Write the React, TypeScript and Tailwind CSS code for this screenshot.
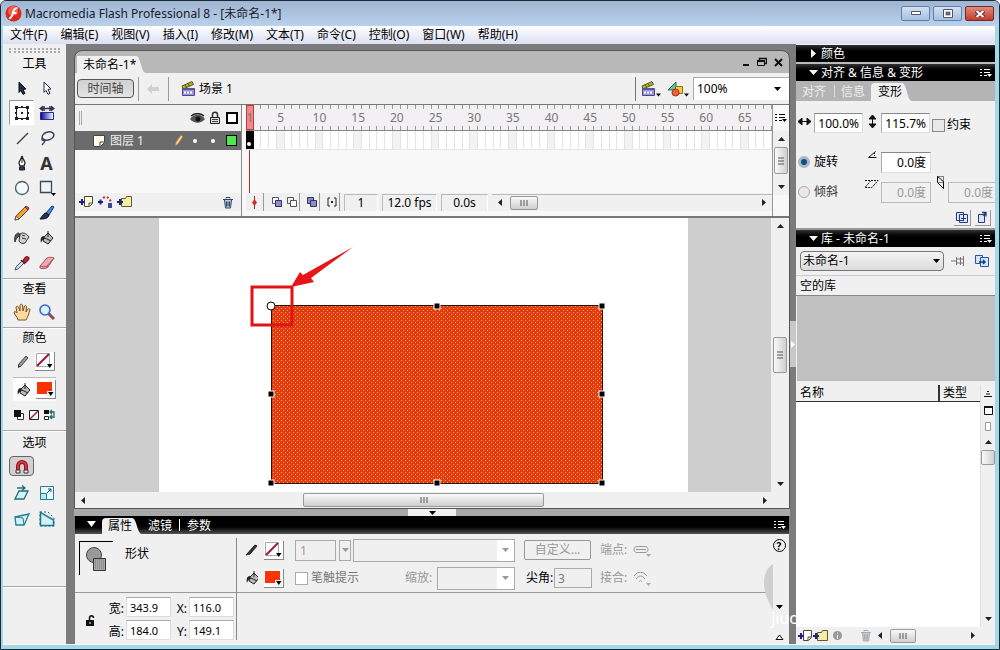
import { useState } from 'react';
import type { ReactNode } from 'react';

type SvgProps = { w?: number; h?: number; className?: string; children: ReactNode };

function Svg({ w = 16, h = 16, className = '', children }: SvgProps) {
  return (
    <svg width={w} height={h} viewBox={`0 0 ${w} ${h}`} fill="none" className={`shrink-0 ${className}`} aria-hidden="true">
      {children}
    </svg>
  );
}

const Down = ({ className = 'text-black' }: { className?: string }) => (
  <Svg w={7} h={4} className={className}><path d="M0 0h7L3.500 4z" fill="currentColor" /></Svg>
);

const Clapper = () => (
  <Svg w={15} h={16}>
    <path d="M1 5 11 .5l1.500 3L2 8z" fill="#b4b030" stroke="#5c5c10" />
    <path d="m4 4 1.500 2M7 2.500 8.500 5" stroke="#5c5c10" />
    <path d="M1.500 7.500h12v7h-12z" fill="#9a94d8" stroke="#4c478c" />
    <path d="M2 8h11" stroke="#5a549c" strokeWidth="2" />
    <path d="M3 11.500h9" stroke="#fff" strokeWidth="2" strokeDasharray="2 1" />
  </Svg>
);

const Bucket = () => (
  <Svg>
    <path d="M5 7 9 3l5 5-5 6-5-3z" fill="#b9b9b9" stroke="#222" />
    <path d="M9 1v6M6 8l6 3" stroke="#222" />
    <path d="M5 6C2 6 1 9 2 13c1-3 2-4 4-4z" fill="#222" />
  </Svg>
);

const Pencil = ({ color = '#f0a030' }: { color?: string }) => (
  <Svg>
    <path d="m1 15 1-4L11 2l3 3-9 9z" fill={color} stroke="#6a4a20" />
    <path d="m11 2 1-1 3 2-1 2z" fill="#d6506a" stroke="#7a2a3a" />
    <path d="m1 15 1-4 3 3z" fill="#fff2d0" stroke="#555" />
  </Svg>
);

const NewSymbol = ({ fill = '#fff' }: { fill?: string }) => (
  <Svg w={15} h={14}>
    <path d="M5.500 1.500h8v7l-3 3h-5z" fill={fill} stroke="#4a4a3a" />
    <path d="M13 8h-3v3" stroke="#4a4a3a" />
    <path d="M0 7h6M3 4v6" stroke="#20208a" strokeWidth="2" />
  </Svg>
);

const NewFolder = () => (
  <Svg w={16} h={14}>
    <path d="M4.500 3.500h4l1-2h5v10h-10z" fill="#f4efa4" stroke="#5e5a30" />
    <path d="M0 7h6M3 4v6" stroke="#20208a" strokeWidth="2" />
  </Svg>
);

const Trash = ({ color = '#2c4668' }: { color?: string }) => (
  <Svg w={12} h={13}>
    <path d="M1 3.500h10M4 2.500v-1h4v1" stroke={color} />
    <path d="m2.500 4 1 8h5l1-8" fill="#b9cce0" stroke={color} />
    <path d="M4.500 5.500v5M6 5.500v5M7.500 5.500v5" stroke={color} />
  </Svg>
);

const MenuGlyph = ({ className = 'text-black' }: { className?: string }) => (
  <Svg w={12} h={10} className={className}>
    <path d="M0 1.500h2M4 1.500h6M0 4.500h2M4 4.500h6M0 7.500h2M4 7.500h3" stroke="currentColor" />
    <path d="M7 6h5L9.500 9z" fill="currentColor" />
  </Svg>
);

function Tool({ label, active, className = '', children }: { label: string; active?: boolean; className?: string; children: ReactNode }) {
  return (
    <button
      type="button"
      aria-label={label}
      className={`flex items-center justify-center ${active ? 'border border-[#999] border-r-white border-b-white bg-white' : ''} ${className}`}
    >
      {children}
    </button>
  );
}

const tools = [
  {
    label: 'Selection',
    icon: <Svg><path d="m5 2 7 7-3 .4 2 4-2 1-2-4-2 2z" fill="#1d2d4a" stroke="#111" /></Svg>,
  },
  {
    label: 'Subselection',
    icon: <Svg><path d="m5 2 7 7-3 .4 2 4-2 1-2-4-2 2z" fill="#fff" stroke="#1d2d4a" /></Svg>,
  },
  {
    label: 'Free transform',
    icon: (
      <Svg>
        <path d="M2.500 2.500h11v11h-11z" stroke="#222" />
        <path d="M1 1h3v3H1zM7 1h2v2H7zM12 1h3v3h-3zM1 7h2v2H1zM13 7h2v2h-2zM1 12h3v3H1zM7 13h2v2H7zM12 12h3v3h-3zM7 7h2v2H7z" fill="#222" />
      </Svg>
    ),
  },
  {
    label: 'Gradient transform',
    icon: (
      <Svg>
        <defs><linearGradient id="grad"><stop stopColor="#000090" /><stop offset="1" stopColor="#fff" /></linearGradient></defs>
        <path d="M1.500 7.500h13v7h-13z" fill="url(#grad)" stroke="#222a90" />
        <path d="M2 3.500h12M5 1v5M11 1v5" stroke="#33334a" strokeWidth="1.500" />
        <path d="m0 3.500 4-3v6zM16 3.500l-4-3v6z" fill="#33334a" />
      </Svg>
    ),
  },
  { label: 'Line', icon: <Svg><path d="M3 14 14 3" stroke="#444" strokeWidth="1.500" /></Svg> },
  {
    label: 'Lasso',
    icon: (
      <Svg>
        <ellipse cx="9" cy="6" rx="6" ry="4" transform="rotate(-18 9 6)" stroke="#3a4658" strokeWidth="1.500" />
        <path d="M4 8c-2 1-1 3 1 2s1 2-2 5" stroke="#3a4658" strokeWidth="1.500" />
      </Svg>
    ),
  },
  {
    label: 'Pen',
    icon: (
      <Svg>
        <path d="M8 1c-1 4-3 5-3 7l1 3h4l1-3c0-2-2-3-3-7z" fill="#fff" stroke="#222" strokeWidth="1.300" />
        <path d="M8 2v6M5.500 12h5v3h-5z" fill="#32326c" stroke="#222" />
      </Svg>
    ),
  },
  { label: 'Text', icon: <span className="text-lg leading-5 font-bold text-[#333]">A</span> },
  { label: 'Oval', icon: <Svg><circle cx="8" cy="8" r="6.500" fill="#f4fafc" stroke="#4a5a6a" strokeWidth="1.300" /></Svg> },
  {
    label: 'Rectangle',
    icon: (
      <Svg w={18}>
        <path d="M2.500 1.500h11v11h-11z" fill="#eef4f8" stroke="#3a4a5a" strokeWidth="1.300" />
        <path d="M13 13h5l-2.500 3z" fill="#000" />
      </Svg>
    ),
  },
  { label: 'Pencil', icon: <Pencil /> },
  {
    label: 'Brush',
    icon: (
      <Svg>
        <path d="m7 8 6-7 2 1-5 8z" fill="#4a86d8" stroke="#1c3c74" />
        <path d="M7 8c-2 0-3 2-6 6 4 0 8 0 9-4z" fill="#23355c" stroke="#111" />
      </Svg>
    ),
  },
  {
    label: 'Ink bottle',
    icon: (
      <Svg>
        <path d="M6 4c3-2 6-1 9 3l-4 6c-3 1-5 0-6-2z" fill="#d2d2d2" stroke="#333" />
        <path d="M5 3C1 3 0 8 1 12c1-3 2-5 5-6z" fill="#555" stroke="#333" />
        <path d="m8 5 3 1M8 8l4 1" stroke="#333" />
      </Svg>
    ),
  },
  { label: 'Paint bucket', icon: <Bucket /> },
  {
    label: 'Eyedropper',
    icon: (
      <Svg>
        <path d="m1 15 1-3 6-6 2 2-6 6z" fill="#cfe6f6" stroke="#456" />
        <path d="m7 5 4 4M9 6c1-2 3-5 5-4s1 3-3 6z" fill="#c02830" stroke="#7a1a24" strokeWidth="1.300" />
      </Svg>
    ),
  },
  {
    label: 'Eraser',
    icon: (
      <Svg>
        <path d="m1 11 7-8c2-1 5-1 7 0l-6 9c-2 2-6 2-8 1z" fill="#f4a8b0" stroke="#a05060" />
        <path d="M1 11c2 1 5 1 7 0l7-8M8 11v2" stroke="#a05060" />
      </Svg>
    ),
  },
];

function StrokeSwatch() {
  return (
    <button type="button" aria-label="Stroke color" className="border-r border-b border-[#888] bg-white p-px">
      <Svg w={17} h={16}>
        <path d="M.5.5h13v13H.5z" fill="#fff" stroke="#aaa" />
        <path d="M1 13 13 1" stroke="#a0183c" strokeWidth="2" />
        <path d="M11 11h5.500l-2.750 4z" fill="#000" />
      </Svg>
    </button>
  );
}

function FillSwatch() {
  return (
    <button type="button" aria-label="Fill color" className="border-r border-b border-[#888] bg-white p-px">
      <Svg w={17} h={16}>
        <path d="M0 1h15v12H0z" fill="#fb3203" />
        <path d="M10 10h7v6h-7z" fill="#f4f4f4" />
        <path d="M11 11h5.500l-2.750 4z" fill="#000" />
      </Svg>
    </button>
  );
}

const Rule = () => <div className="h-[2px] border-t border-[#a8a8a8] bg-white" />;

function Toolbox() {
  return (
    <aside className="flex w-[63px] shrink-0 flex-col bg-[#f0f0f0] text-center">
      <div className="mx-[6px] mt-1 h-[5px] border-y-2 border-dotted border-[#aaa]" />
      <h2 className="mt-[3px] leading-4">工具</h2>
      <div className="mx-[6px] mt-[3px] grid w-[50px] grid-cols-2">
        {tools.map((t) => (
          <Tool key={t.label} label={t.label} active={t.label === 'Free transform'} className="h-[25px]">
            {t.icon}
          </Tool>
        ))}
      </div>
      <div className="mt-[3px]"><Rule /></div>
      <h2 className="mt-px leading-4">查看</h2>
      <div className="mx-[6px] mt-[2px] mb-[3px] grid h-[25px] w-[50px] grid-cols-2">
        <Tool label="Hand">
          <Svg w={18} h={18}>
            <path d="M5 17c0-3-4-5-4-8 1-1 2 0 3 1L3 4c1-1 2-1 2.500 0L7 8V2c1-1 2-1 2.500 0L10 8l1.500-5c1-1 2 0 2 1L13 9l2-3c1-1 2 0 2 1-1 3-2 7-4 10z" fill="#fbd9a0" stroke="#7a5220" />
          </Svg>
        </Tool>
        <Tool label="Zoom">
          <Svg w={18} h={18}>
            <path d="m10 10 6 6" stroke="#8a4a5a" strokeWidth="3" />
            <circle cx="7" cy="7" r="5" fill="#d8f0ff" stroke="#3c66c4" strokeWidth="1.600" />
          </Svg>
        </Tool>
      </div>
      <Rule />
      <h2 className="mt-px leading-4">颜色</h2>
      <div className="flex h-[30px] items-center justify-end gap-1 pr-[11px]">
        <Svg><path d="m3 12 8-9 2 2-8 9z" fill="#999" stroke="#444" /><path d="M3 12v3l2-1z" fill="#333" /></Svg>
        <StrokeSwatch />
      </div>
      <div className="mx-[10px] mt-px flex h-6 items-center justify-end gap-1 border-t border-[#bbb] bg-[#fdfdfd]">
        <Bucket />
        <FillSwatch />
      </div>
      <div className="mt-1 flex h-5 items-center justify-center gap-[3px]">
        <Tool label="Black and white">
          <Svg w={12} h={12}><path d="M4.500 4.500h6v6h-6z" fill="#fff" stroke="#333" /><path d="M1 1h7v7H1z" fill="#111" /></Svg>
        </Tool>
        <Tool label="No color">
          <Svg w={12} h={12}><path d="M1.500 1.500h9v9h-9z" fill="#fff" stroke="#222" /><path d="m2 10 8-8" stroke="#a0183c" strokeWidth="1.500" /></Svg>
        </Tool>
        <Tool label="Swap colors">
          <Svg w={13} h={12}>
            <path d="M1 1h5v4H1z" fill="#111" /><path d="M1.500 7.500h4v3h-4z" fill="#fff" stroke="#222" />
            <path d="M7 3h4v5H7M9 1 7 3l2 2M9 6 7 8l2 2" stroke="#1d6c70" strokeWidth="1.300" />
          </Svg>
        </Tool>
      </div>
      <div className="mt-[5px]"><Rule /></div>
      <h2 className="mt-[3px] leading-4">选项</h2>
      <div className="mx-[6px] mt-[5px] grid w-[50px] grid-cols-2">
        <button type="button" aria-label="Snap" aria-pressed="true" className="mb-1 flex h-5 items-center justify-center rounded-sm border border-[#666] bg-[#d4d0d0]">
          <Svg w={14} h={15}>
            <path d="M3 13V7a4 4 0 0 1 8 0v6" stroke="#8a1420" strokeWidth="4" />
            <path d="M3 11V7a4 4 0 0 1 8 0v4" stroke="#d83444" strokeWidth="2" />
            <path d="M1 11h4v3H1zM9 11h4v3H9z" fill="#eef" stroke="#333" />
          </Svg>
        </button>
        <span />
        <Tool label="Rotate and skew" className="h-[26px]">
          <Svg><path d="M5 6h9l-4 8H1z" fill="#d4f2f4" stroke="#1f6f78" strokeWidth="1.300" /><path d="M3 3h7M8 .5 11 3 8 5.500" stroke="#1f6f78" strokeWidth="1.300" /></Svg>
        </Tool>
        <Tool label="Scale" className="h-[26px]">
          <Svg><path d="M1.500 1.500h13v13h-13z" fill="#eafcff" stroke="#1f7f98" /><path d="M1.500 8.500h6v6h-6z" fill="#bfe6ee" stroke="#1f7f98" /><path d="m8 8 4-4M9 4h3v3" stroke="#1d4c70" /></Svg>
        </Tool>
        <Tool label="Distort" className="h-[26px]">
          <Svg><path d="m1 6 14-3-5 11H2z" fill="#d4f2f4" stroke="#1f7f98" strokeWidth="1.300" /><path d="m1 6 8 1 1 7" stroke="#1f7f98" /></Svg>
        </Tool>
        <Tool label="Envelope" className="h-[26px]">
          <Svg><path d="M1.500 1.500v13h13V9z" fill="#d4f2f4" stroke="#1f7f98" strokeWidth="1.500" /><path d="M1 1h8l6 6v8H1z" stroke="#1f5f78" strokeDasharray="2 2" /></Svg>
        </Tool>
      </div>
      <div className="mt-[54px]"><Rule /></div>
    </aside>
  );
}

function TitleBar() {
  return (
    <header className="flex h-[25px] shrink-0 items-center gap-[3px] bg-gradient-to-b from-[#9fb5d1] to-[#b9d1ec] pr-[5px] pl-1 text-[#1a1a2a]">
      <Svg w={17} h={17}>
        <circle cx="8.500" cy="8.500" r="8" fill="#d92a1c" />
        <circle cx="8" cy="6" r="5" fill="#f0604c" />
        <path d="M12.500 3C8 3 8 8 7.500 9.500S6 13 4 13.500M7.500 8h4" stroke="#fff" strokeWidth="2" />
      </Svg>
      <h1 className="flex-1 text-[12px]">Macromedia Flash Professional 8 - [未命名-1*]</h1>
      <div className="flex gap-[3px]">
        <button type="button" aria-label="Minimize" className="flex h-[15px] w-[29px] items-center justify-center rounded-xs border border-[#6580a8] bg-gradient-to-b from-[#d2e0f2] to-[#a5c0e0]">
          <Svg w={10} h={5}><path d="M.5.5h9v3h-9z" fill="#fff" stroke="#556" /></Svg>
        </button>
        <button type="button" aria-label="Maximize" className="flex h-[15px] w-[29px] items-center justify-center rounded-xs border border-[#6580a8] bg-gradient-to-b from-[#d2e0f2] to-[#a5c0e0]">
          <Svg w={10} h={9}><path d="M1.500 1.500h7v6h-7z" fill="#889" stroke="#fff" strokeWidth="2" /><path d="M.5.5h9v8h-9zM3.500 3.500h3v2h-3z" stroke="#556" /></Svg>
        </button>
        <button type="button" aria-label="Close" className="flex h-[15px] w-[29px] items-center justify-center rounded-xs border border-[#7a2a22] bg-gradient-to-b from-[#e08a7c] to-[#c0392b]">
          <Svg w={10} h={8}><path d="m1 1 8 6M9 1 1 7" stroke="#633" strokeWidth="3.500" /><path d="m1.500 1 7 6M8.500 1l-7 6" stroke="#fff" strokeWidth="2" /></Svg>
        </button>
      </div>
    </header>
  );
}

const menus = ['文件(F)', '编辑(E)', '视图(V)', '插入(I)', '修改(M)', '文本(T)', '命令(C)', '控制(O)', '窗口(W)', '帮助(H)'];

function MenuBar() {
  return (
    <nav className="flex h-[18px] shrink-0 items-center gap-[13px] bg-gradient-to-b from-white to-[#dadff2] pl-[7px]">
      {menus.map((m) => (
        <button key={m} type="button" className="leading-4">{m}</button>
      ))}
    </nav>
  );
}

function HScroll({ thumb, before = 'w-0' }: { thumb: string; before?: string }) {
  return (
    <div className="flex h-4 min-w-0 flex-1 items-center bg-[#f0f0f0]">
      <button type="button" aria-label="Scroll left" className="flex w-4 justify-center"><Svg w={4} h={7}><path d="M4 0v7L0 3.500z" fill="#222" /></Svg></button>
      <span className={before} />
      <div className={`flex h-[14px] items-center justify-center rounded-xs border border-[#999] bg-gradient-to-b from-[#fafafa] to-[#cfcfd2] ${thumb}`}>
        <Svg w={8} h={6}><path d="M1 0v6M4 0v6M7 0v6" stroke="#555" /></Svg>
      </div>
      <span className="flex-1" />
      <button type="button" aria-label="Scroll right" className="flex w-4 justify-center"><Svg w={4} h={7}><path d="M0 0v7l4-3.500z" fill="#222" /></Svg></button>
    </div>
  );
}

function VScroll({ thumb, before = 'h-0', grip = true }: { thumb: string; before?: string; grip?: boolean }) {
  return (
    <div className="flex min-h-0 flex-1 flex-col items-center bg-[#f0f0f0]">
      <button type="button" aria-label="Scroll up" className="flex h-4 shrink-0 items-center"><Svg w={7} h={4}><path d="M0 4h7L3.500 0z" fill="#222" /></Svg></button>
      <span className={before} />
      <div className={`flex w-[14px] shrink-0 items-center justify-center rounded-xs border border-[#999] bg-gradient-to-r from-[#fafafa] to-[#cfcfd2] ${thumb}`}>
        {grip && <Svg w={6} h={8}><path d="M0 1h6M0 4h6M0 7h6" stroke="#555" /></Svg>}
      </div>
      <span className="flex-1" />
      <button type="button" aria-label="Scroll down" className="flex h-4 shrink-0 items-center"><Down className="text-[#222]" /></button>
    </div>
  );
}

function EditBar() {
  return (
    <div className="flex h-8 shrink-0 items-center border-b border-[#777] bg-[#f0f0f0]">
      <button type="button" aria-pressed="true" className="ml-[2px] h-[19px] w-[57px] rounded-sm border border-[#555] bg-gradient-to-b from-[#cfcfcf] to-[#e4e4e4] leading-4 text-[#444]">时间轴</button>
      <span className="ml-1 h-6 w-px bg-[#999]" />
      <button type="button" aria-label="Back" className="ml-[7px]">
        <Svg w={14} h={10}><path d="M6 0v3h7v4H6v3L1 5z" fill="#d0d0d0" /></Svg>
      </button>
      <span className="ml-[8px] h-6 w-px bg-[#999]" />
      <span className="ml-[12px] flex items-center gap-[3px]"><Clapper />场景 1</span>
      <span className="flex-1" />
      <span className="h-6 w-px bg-[#777]" />
      <Tool label="Edit scene" className="ml-[5px]"><Clapper /><Down className="mt-3 w-[5px]" /></Tool>
      <Tool label="Edit symbols" className="ml-[6px]">
        <Svg w={17} h={16}>
          <path d="M1 9 9 1v8z" fill="#5cc8a0" stroke="#207050" />
          <path d="M8.500 5.500h7v7h-7z" fill="#f0d040" stroke="#907010" />
          <circle cx="8.500" cy="11.500" r="3.500" fill="#f06040" stroke="#a03010" />
        </Svg>
        <Down className="mt-3 w-[5px]" />
      </Tool>
      <div className="relative ml-1">
        <select aria-label="Zoom level" className="h-[23px] w-[96px] appearance-none border-t border-l border-[#aaa] bg-white pl-[3px] text-[12px]">
          <option>100%</option>
        </select>
        <Down className="pointer-events-none absolute top-[10px] right-2" />
      </div>
    </div>
  );
}

const frames = Array.from({ length: 68 }, (_, i) => i + 1);

function Timeline() {
  return (
    <section className="flex h-[113px] shrink-0 border-b-2 border-[#777] bg-[#f8f8f8]">
      <div className="flex w-[167px] shrink-0 flex-col border-r border-[#888]">
        <div className="flex h-[26px] items-center bg-[#f0f0f0]">
          <span className="ml-1 h-[14px] w-[3px] border-x border-[#aaa]" />
          <span className="flex-1" />
          <Svg w={15} h={11}><path d="M0 6c4-6 11-6 15 0-4 5-11 5-15 0z" fill="#555" /><path d="M1 3c4-3 9-3 13 0" stroke="#222" strokeWidth="1.500" /><circle cx="8" cy="6" r="2.500" fill="#111" /></Svg>
          <Svg w={12} h={14} className="ml-1"><path d="M3.500 6V3.500c0-3 5-3 5 0V6" stroke="#333" strokeWidth="1.500" /><path d="M1.500 6.500h9v6h-9z" fill="#ddd" stroke="#222" /><path d="M3 8.500h6M3 10.500h6" stroke="#444" /></Svg>
          <Svg w={12} h={12} className="mr-[3px] ml-[5px]"><path d="M1 1h10v10H1z" fill="#fff" stroke="#000" strokeWidth="2" /></Svg>
        </div>
        <div className="flex h-[19px] items-center bg-[#6b6b6b] text-[#eee]">
          <Svg w={12} h={12} className="ml-[18px]"><path d="M.5.5h11v7l-4 4h-7z" fill="#fffce8" stroke="#444" /><path d="M11 7H7v4" stroke="#444" /></Svg>
          <span className="ml-[5px]">图层 1</span>
          <span className="flex-1" />
          <Svg w={9} h={13}><path d="m1 12 1-4 5-7 2 1.500L4 10z" fill="#f8d8a0" stroke="#b07830" /></Svg>
          <span className="ml-[10px] size-1 rounded-full bg-white" />
          <span className="ml-[14px] size-1 rounded-full bg-white" />
          <span className="mr-1 ml-[11px] size-[11px] border border-black bg-[#4de84d]" />
        </div>
        <div className="flex-1" />
        <div className="mb-[5px] flex h-[18px] items-center gap-1 bg-[#f0f0f0] pl-1">
          <Tool label="Insert layer"><NewSymbol fill="#fffcd8" /></Tool>
          <Tool label="Add motion guide">
            <Svg w={15} h={14}><path d="M0 7h5M2.500 4.500v5" stroke="#20208a" strokeWidth="2" /><path d="M5 3c3-2 7-1 8 5" stroke="#c02030" strokeWidth="2" strokeDasharray="2 2" /><path d="M10 8h4v5h-4z" fill="#3a4a90" /></Svg>
          </Tool>
          <Tool label="Insert folder"><NewFolder /></Tool>
          <span className="flex-1" />
          <Tool label="Delete layer" className="mr-[7px]"><Trash /></Tool>
        </div>
      </div>
      <div className="ml-1 flex min-w-0 flex-1 flex-col">
        <div className="flex h-[26px] border-b border-[#888] bg-[#f2f0f2] text-[#777]">
          {frames.map((n) => (
            <div
              key={n}
              className={`relative flex min-w-0 flex-1 items-center justify-center ${n === 1 ? 'bg-[#f08a8a] outline -outline-offset-1 outline-[#b83a3a]' : ''}`}
            >
              {n > 1 && <span className="absolute top-0 right-0 h-1 w-px bg-[#999]" />}
              {n > 1 && <span className="absolute right-0 bottom-0 h-1 w-px bg-[#999]" />}
              {(n === 1 || n % 5 === 0) && <span className="shrink-0 leading-4 whitespace-nowrap">{n}</span>}
            </div>
          ))}
        </div>
        <div className="flex h-[19px] border-b border-[#e8e8e8] bg-white">
          {frames.map((n) => (
            <div key={n} className={`flex min-w-0 flex-1 items-end justify-center border-r ${n === 1 ? 'border-black bg-black pb-[3px]' : n % 5 === 0 ? 'border-[#e4e4e4] bg-[#f2f2f2]' : 'border-[#e4e4e4]'}`}>
              {n === 1 && <span className="size-1 shrink-0 rounded-full bg-white" />}
            </div>
          ))}
        </div>
        <div className="flex-1 pl-[3px]"><div className="h-full w-px bg-[#b03030]" /></div>
        <div className="mb-[5px] flex h-[18px] items-center bg-[#f0f0f0]">
          <Tool label="Center frame" className="h-[18px] w-[18px] border-r border-[#999]"><Svg w={5} h={13}><path d="M2.500 0v13" stroke="#b02020" /><path d="M2.500 3 5 6.500 2.500 10 0 6.500z" fill="#d03030" /></Svg></Tool>
          <Tool label="Onion skin" className="ml-[6px] h-[18px] w-[14px]"><Svg w={10} h={10}><path d="M.5.5h6v6h-6z" fill="#fff" stroke="#557" /><path d="M3.500 3.500h6v6h-6z" fill="#8c8cd0" stroke="#335" /></Svg></Tool>
          <Tool label="Onion skin outlines" className="h-[18px] w-[16px] border-r border-[#999]"><Svg w={10} h={10}><path d="M.5.5h6v6h-6z" stroke="#555" /><path d="M3.500 3.500h6v6h-6z" fill="#fff" stroke="#555" /></Svg></Tool>
          <Tool label="Edit multiple frames" className="ml-[5px] h-[18px] w-[15px] border-r border-[#999]"><Svg w={10} h={10}><path d="M.5.5h6v6h-6z" fill="#8c8cd0" stroke="#335" /><path d="M3.500 3.500h6v6h-6z" fill="#8c8cd0" stroke="#335" /></Svg></Tool>
          <Tool label="Modify onion markers" className="ml-[5px] h-[18px] w-[15px] border-r border-[#999]"><Svg w={10} h={10}><path d="M3 1H1v8h2M7 1h2v8H7" stroke="#222" /><path d="M4 4h2v2H4z" fill="#222" /></Svg></Tool>
          <output className="ml-1 w-[34px] border-x border-t border-[#bbb] border-r-white text-center leading-4">1</output>
          <output className="ml-1 w-[55px] border-x border-t border-[#bbb] border-r-white text-center leading-4 whitespace-nowrap">12.0 fps</output>
          <output className="ml-1 w-[47px] border-x border-t border-[#bbb] border-r-white text-center leading-4">0.0s</output>
          <span className="ml-1 flex flex-1 border-t border-[#bbb]"><HScroll thumb="w-7" before="w-[2px]" /></span>
        </div>
      </div>
      <div className="flex w-[17px] shrink-0 flex-col border-l border-[#999]">
        <button type="button" aria-label="Timeline options" className="flex h-[26px] shrink-0 items-center justify-center"><MenuGlyph /></button>
        <div className="mb-[21px] flex min-h-0 flex-1 flex-col"><VScroll thumb="h-[27px]" /></div>
      </div>
    </section>
  );
}

const handles = [[278, 88], [443, 88], [112, 176], [443, 176], [112, 265], [278, 265], [443, 265]];

function Stage() {
  return (
    <section className="flex min-h-0 flex-1 flex-col bg-[#f0f0f0]">
      <div className="flex min-h-0 flex-1">
        <div className="flex min-w-0 flex-1 justify-center overflow-hidden bg-[#cecece]">
          <svg className="h-full w-[529px] shrink-0 bg-white" fill="none" role="img" aria-label="Selected rectangle">
            <defs>
              <pattern id="dots" width="4" height="4" patternUnits="userSpaceOnUse">
                <path d="M0 0h4v4H0z" fill="#e43a0a" />
                <path d="M0 0h1v1H0zM2 2h1v1H2z" fill="#ffb088" />
              </pattern>
            </defs>
            <path d="M112 87h332v178H112z" fill="url(#dots)" />
            <path d="M112.500 87.500h331v178h-331z" stroke="#30100a" />
            {handles.map(([x, y]) => (
              <rect key={`${x}-${y}`} x={x - 3} y={y - 3} width="6" height="6" fill="#000" stroke="#fff" />
            ))}
            <circle cx="112" cy="88" r="4" fill="#fff" stroke="#000" />
            <path d="M93 69h40v38H93z" stroke="#e01416" strokeWidth="3" />
            <path d="M194 29 152 60l3 4-23 5 9-15 3 3z" fill="#e81416" />
          </svg>
        </div>
        <div className="flex w-[18px] shrink-0 flex-col"><VScroll thumb="h-[36px]" before="h-[103px]" /></div>
      </div>
      <div className="mr-4 flex h-4 shrink-0"><HScroll thumb="w-[241px]" before="w-[212px]" /></div>
    </section>
  );
}

function DocumentPanel() {
  return (
    <main className="flex min-h-0 flex-1 flex-col overflow-hidden rounded-t-lg border border-[#555] bg-[#b8b8b8]">
      <div className="flex h-[22px] shrink-0 items-end">
        <button type="button" className="ml-[2px] h-[17px] bg-[#f0f0f0] pl-[6px] leading-4">未命名-1*</button>
        <Svg w={10} h={17}><path d="M0 0c5 0 5 17 10 17H0z" fill="#f0f0f0" /></Svg>
        <span className="flex-1" />
        <div className="mb-[6px] flex items-center gap-[7px] pr-[6px]">
          <Tool label="Minimize document"><Svg w={8} h={10}><path d="M1 8h6" stroke="#111" strokeWidth="2" /></Svg></Tool>
          <Tool label="Restore document"><Svg w={10} h={10}><path d="M2.500 3V1.500h7v5H8" stroke="#111" strokeWidth="1.500" /><path d="M.5 4.500h7v4h-7z" stroke="#111" /><path d="M0 4h8" stroke="#111" strokeWidth="2" /></Svg></Tool>
          <Tool label="Close document"><Svg w={9} h={9}><path d="m1 1 7 7M8 1 1 8" stroke="#111" strokeWidth="2" /></Svg></Tool>
        </div>
      </div>
      <EditBar />
      <Timeline />
      <Stage />
    </main>
  );
}

function Drop({ label, className }: { label: string; className: string }) {
  return (
    <div className={`relative h-[23px] border border-[#aaa] bg-[#f0f0f0] ${className}`}>
      <select aria-label={label} disabled className="size-full appearance-none" />
      <span className="pointer-events-none absolute top-0 right-0 flex h-full w-[17px] items-center justify-center bg-white"><Down className="text-[#999]" /></span>
    </div>
  );
}

function Measure({ label, value }: { label: string; value: string }) {
  return (
    <label className="flex items-end">
      <span className="w-4 text-right leading-4">{label}</span>
      <input defaultValue={value} className="ml-[2px] h-[20px] w-[45px] border border-[#ddd] border-t-[#aaa] bg-white pl-[3px] text-[11px]" />
    </label>
  );
}

function Properties() {
  return (
    <section className="flex h-[128px] shrink-0 flex-col border-x border-[#777] bg-[#f0f0f0]">
      <div className="flex h-[18px] shrink-0 items-end bg-gradient-to-b from-black via-black to-[#555] text-white">
        <Svg w={9} h={6} className="mb-[7px] ml-3"><path d="M0 0h9L4.500 6z" fill="#fff" /></Svg>
        <button type="button" className="ml-[6px] h-[16px] rounded-tl bg-[#f0f0f0] pl-[6px] leading-4 text-black">属性</button>
        <Svg w={10} h={16}><path d="M0 0c5 0 5 16 10 16H0z" fill="#f0f0f0" /></Svg>
        <button type="button" className="ml-[6px] leading-4">滤镜</button>
        <span className="mb-[3px] ml-[7px] h-3 w-px bg-white" />
        <button type="button" className="ml-[7px] leading-4">参数</button>
        <span className="flex-1" />
        <MenuGlyph className="mr-[3px] mb-1 text-white" />
      </div>
      <div className="flex min-h-0 flex-1">
        <div className="flex w-[161px] shrink-0 flex-col">
          <div className="flex h-[59px] items-start border-b border-[#999]">
            <div className="mt-[7px] ml-1 flex size-[34px] items-center justify-center border-t border-l border-black">
              <Svg w={26} h={26}>
                <circle cx="10" cy="9" r="7.500" fill="#999" stroke="#444" />
                <path d="M9.500 12.500h12v12h-12z" fill="#a8a8a8" stroke="#333" />
                <path d="M11 14h9M11 16h9M11 18h9M11 20h9M11 22h9" stroke="#777" strokeDasharray="1 1" />
              </Svg>
            </div>
            <span className="mt-3 ml-3 leading-4">形状</span>
          </div>
          <div className="flex flex-1 items-center">
            <Svg w={9} h={12} className="mt-1 ml-[11px]"><path d="M3.500 6V3c0-3 4-3 4 0" stroke="#111" strokeWidth="1.500" /><path d="M0 5h8v6H0z" fill="#111" /><path d="M4 7v2" stroke="#fff" /></Svg>
            <div className="ml-[13px] grid grid-cols-2 gap-y-[3px]">
              <Measure label="宽:" value="343.9" />
              <Measure label="X:" value="116.0" />
              <Measure label="高:" value="184.0" />
              <Measure label="Y:" value="149.1" />
            </div>
          </div>
        </div>
        <div className="my-1 w-px bg-[#888]" />
        <div className="min-w-0 flex-1">
          <div className="flex h-[59px] flex-col gap-1 border-b border-[#999] pt-1 pl-2 text-[#999]">
            <div className="flex h-6 items-center">
              <Svg w={13} h={14}><path d="m1 12 9-10 2 1-7 8z" fill="#333" stroke="#222" /></Svg>
              <span className="ml-[6px] flex"><StrokeSwatch /></span>
              <input aria-label="Stroke height" disabled defaultValue="1" className="ml-[11px] h-[21px] w-[41px] border border-[#aaa] bg-[#f0f0f0] pl-1" />
              <button type="button" aria-label="Stroke height slider" disabled className="ml-[3px] flex h-[21px] w-3 items-center justify-center border border-[#aaa]"><Down className="text-[#999]" /></button>
              <Drop label="Stroke style" className="ml-[2px] w-[162px]" />
              <button type="button" disabled className="ml-[9px] h-5 w-[67px] rounded-xs border border-[#999] leading-4">自定义...</button>
              <button type="button" disabled className="ml-[9px] flex items-center gap-[6px] leading-4">
                端点:
                <Svg w={18} h={14}><path d="M4 3.500h8c4 0 4 6 0 6H4c-4 0-4-6 0-6zM3 6.500h10" stroke="#999" /><path d="M13 11h5l-2.500 3z" fill="#aaa" /></Svg>
              </button>
            </div>
            <div className="flex h-6 items-center">
              <span className="flex w-[13px] overflow-hidden"><Bucket /></span>
              <span className="ml-[6px] flex"><FillSwatch /></span>
              <label className="ml-[11px] flex w-[110px] items-center gap-[3px] text-[#777]">
                <input type="checkbox" disabled className="size-[13px] appearance-none border border-[#aaa] bg-white" />
                笔触提示
              </label>
              <span className="w-8">缩放:</span>
              <Drop label="Scale" className="w-[78px]" />
              <label className="ml-[11px] flex items-center text-black">
                <span className="w-7">尖角:</span>
                <input defaultValue="3" disabled className="h-5 w-[38px] border border-[#aaa] bg-[#f0f0f0] pl-[3px] text-[#777]" />
              </label>
              <button type="button" disabled className="ml-[8px] flex items-center gap-[6px] leading-4">
                接合:
                <Svg w={18} h={16}><path d="M1 6c4-5 9-5 13 0M3 9c3-4 6-4 9 0M6 12c1-2 2-2 3 0" stroke="#999" /><path d="M13 13h5l-2.500 3z" fill="#aaa" /></Svg>
              </button>
            </div>
          </div>
        </div>
        <div className="relative flex w-5 shrink-0 flex-col items-center">
          <button type="button" aria-label="Help" className="mt-[5px] flex size-[13px] items-center justify-center rounded-full border border-black text-[10px] leading-3 font-bold">?</button>
          <Svg w={9} h={46} className="absolute top-[30px] right-4"><path d="M9 0C-3 8-3 26 9 46z" fill="#cfcfcf" /></Svg>
          <span className="absolute right-[-8px] bottom-4 text-base leading-5 text-white">jiuc</span>
          <span className="flex-1" />
          <Down className="mb-[25px]" />
          <Svg w={9} h={6} className="mb-1"><path d="M1 5.500h7L4.500 1z" stroke="#111" /></Svg>
        </div>
      </div>
    </section>
  );
}

function PanelHead({ open, title, menu }: { open: boolean; title: string; menu?: boolean }) {
  return (
    <button type="button" className="flex h-[17px] w-full shrink-0 items-center bg-gradient-to-b from-[#333] via-black to-black pr-[3px] pl-[13px] text-white">
      <Svg w={9} h={9}>{open ? <path d="M0 2h9L4.500 7z" fill="#fff" /> : <path d="M2 0v9l5-4.500z" fill="#fff" />}</Svg>
      <span className="ml-[3px] leading-4">{title}</span>
      <span className="flex-1" />
      {menu && <MenuGlyph className="text-white" />}
    </button>
  );
}

const fieldClass = 'h-5 w-[49px] shrink-0 border border-[#ddd] border-t-[#888] border-l-[#aaa] bg-white pr-[3px] text-right';
const fieldOffClass = 'h-[21px] w-[50px] shrink-0 border border-[#bbb] bg-[#f0f0f0] pr-1 text-right text-[#999]';

function TransformPanel() {
  const [mode, setMode] = useState('rotate');
  return (
    <div className="flex h-[127px] shrink-0 flex-col overflow-hidden bg-[#f0f0f0] pl-[2px]">
      <div className="mt-[11px] flex h-[22px] items-center">
        <Svg w={13} h={7} className="mb-1"><path d="M0 3.500 4 0v7zM13 3.500 9 0v7zM3 3.500h7" fill="#111" stroke="#111" /></Svg>
        <input aria-label="Width" defaultValue="100.0%" className={`ml-[3px] ${fieldClass}`} />
        <Svg w={7} h={13} className="mb-1 ml-[6px]"><path d="M3.500 0 0 4h7zM3.500 13 0 9h7zM3.500 3v7" fill="#111" stroke="#111" /></Svg>
        <input aria-label="Height" defaultValue="115.7%" className={`ml-[5px] ${fieldClass}`} />
        <label className="ml-[2px] flex items-center gap-[2px] pt-1">
          <input type="checkbox" className="size-[13px] appearance-none border border-[#888] bg-[#e8e8e8]" />
          约束
        </label>
      </div>
      <div className="mt-4 flex h-6 items-center">
        <label className="flex w-[66px] shrink-0 items-center gap-1">
          <input type="radio" name="mode" checked={mode === 'rotate'} onChange={() => setMode('rotate')} className="size-3 appearance-none rounded-full border border-[#888] bg-white checked:border-[3px] checked:border-[#a8b8c8] checked:bg-[#1a4a80]" />
          旋转
        </label>
        <Svg w={15} h={9} className="mb-4"><path d="M4.500 7.500h8M4.500 7.500l7-6" stroke="#111" /><path d="M10.500 3v5" stroke="#111" strokeDasharray="1 1" /></Svg>
        <input aria-label="Rotate" defaultValue="0.0度" className="ml-[2px] h-[21px] w-[50px] border border-[#ddd] border-t-[#888] border-l-[#aaa] bg-white pr-1 text-right" />
      </div>
      <div className="mt-[6px] flex h-6 items-center">
        <label className="flex w-[66px] shrink-0 items-center gap-1 text-[#333]">
          <input type="radio" name="mode" checked={mode === 'skew'} onChange={() => setMode('skew')} className="size-3 appearance-none rounded-full border border-[#aaa] bg-[#e8e8e8]" />
          倾斜
        </label>
        <Svg w={15} h={10} className="mb-4"><path d="M1 1.500h13l-6 7H1l6-7" stroke="#111" strokeDasharray="2 1" /></Svg>
        <input aria-label="Skew horizontally" disabled defaultValue="0.0度" className={`ml-[2px] ${fieldOffClass}`} />
        <Svg w={10} h={15} className="mb-5 ml-[5px]"><path d="M1.500 1.500v6l6 6v-7z" stroke="#111" /><path d="M1.500 1.500h6v6h-6" stroke="#111" strokeDasharray="1 1" /></Svg>
        <input aria-label="Skew vertically" disabled defaultValue="0.0度" className={`ml-[2px] ${fieldOffClass}`} />
      </div>
      <div className="mt-[6px] flex justify-end gap-1 pr-1">
        <Tool label="Copy and apply transform" className="border-r border-b border-[#999] p-px"><Svg w={14} h={13}><path d="M1.500 1.500h7v8h-7zM4.500 3.500h8v8h-8z" fill="#dde4f8" stroke="#223a80" /><path d="M6 7.500h5M8.500 5v5" stroke="#223a80" /></Svg></Tool>
        <Tool label="Reset" className="border-r border-b border-[#999] p-px"><Svg w={13} h={13}><path d="M2.500 3.500h6v8h-6z" fill="#dde4f8" stroke="#223a80" /><path d="M6 1.500h4v4M10 1.500l-3 3" stroke="#223a80" strokeWidth="1.300" /></Svg></Tool>
      </div>
    </div>
  );
}

function LibraryPanel() {
  return (
    <div className="flex min-h-0 flex-1 flex-col bg-[#f0f0f0]">
      <div className="flex h-[29px] shrink-0 items-center border-b border-[#ccc] pl-1">
        <div className="relative">
          <select aria-label="Library document" className="h-5 w-[144px] appearance-none rounded-sm border border-[#777] bg-gradient-to-b from-[#f4f4f4] to-[#dcdcdc] pl-[2px]">
            <option>未命名-1</option>
          </select>
          <Down className="pointer-events-none absolute top-2 right-1" />
        </div>
        <Tool label="Pin library" className="ml-[7px]"><Svg w={14} h={12}><path d="M0 6h5M5.500 2v8M12.500 1v10M5.500 4h7M5.500 8h7M9.500 2v8" stroke="#777" /></Svg></Tool>
        <Tool label="New library" className="ml-[10px]"><Svg w={14} h={12}><path d="M.5.5h7v8h-7z" fill="#d4e4fa" stroke="#2a56a8" /><path d="M5.500 2.500h8v9h-8z" fill="#d4e4fa" stroke="#2a56a8" /><path d="M4 7h6M8 5l2 2-2 2" stroke="#123a98" strokeWidth="1.500" /></Svg></Tool>
      </div>
      <div className="h-5 shrink-0 border-b border-[#888] pl-1 leading-[19px]">空的库</div>
      <div className="ml-px h-[85px] shrink-0 bg-[#c0c0c0]" />
      <div className="mt-1 flex min-h-0 flex-1">
        <div className="flex min-w-0 flex-1 flex-col bg-white">
          <table className="w-full border-b border-[#333] bg-[#f0f0f0] text-left">
            <thead>
              <tr className="h-4 leading-4">
                <th className="border-r-2 border-[#333] pl-1 font-normal">名称</th>
                <th className="w-[41px] pl-[3px] font-normal">类型</th>
              </tr>
            </thead>
          </table>
        </div>
        <div className="flex w-[15px] shrink-0 flex-col items-center border-l border-[#ddd]">
          <Tool label="Toggle sorting order" className="h-[17px] shrink-0"><Svg w={8} h={8}><path d="M3 1.500h2M2 4h4M0 6.500h8" stroke="#111" /></Svg></Tool>
          <Tool label="Wide library view" className="h-4 shrink-0"><Svg w={9} h={9}><path d="M.5 1h8v7.500h-8z" fill="#fff" stroke="#111" /><path d="M0 1h9" stroke="#111" strokeWidth="2" /></Svg></Tool>
          <Tool label="Narrow library view" className="h-4 shrink-0"><Svg w={6} h={10}><path d="M.5 1.500h5v8h-5z" fill="#fff" stroke="#999" /></Svg></Tool>
          <VScroll thumb="h-[15px]" grip={false} />
        </div>
      </div>
      <div className="flex h-[17px] shrink-0 items-center pl-[2px]">
        <Tool label="New symbol"><NewSymbol /></Tool>
        <Tool label="New folder"><NewFolder /></Tool>
        <Tool label="Item properties" className="ml-1"><Svg w={9} h={9}><circle cx="4.500" cy="4.500" r="4.500" fill="#999" /><path d="M4.500 1.500v1M4.500 4v4" stroke="#fff" /></Svg></Tool>
        <Tool label="Delete item" className="ml-[18px]"><Trash color="#aaa" /></Tool>
        <HScroll thumb="w-[26px]" before="w-[2px]" />
        <span className="w-[14px]" />
      </div>
    </div>
  );
}

function RightDock() {
  return (
    <aside className="flex w-[199px] shrink-0 flex-col overflow-hidden bg-[#f0f0f0] pt-px">
      <PanelHead open={false} title="颜色" />
      <div className="h-[2px] shrink-0 bg-[#bbb]" />
      <PanelHead open title="对齐 & 信息 & 变形" menu />
      <div className="flex h-5 shrink-0 items-end bg-[#b4b4b4] pl-[6px] text-[#eee]">
        <button type="button" className="leading-[18px]">对齐</button>
        <span className="mb-1 ml-2 h-3 w-px bg-[#ddd]" />
        <button type="button" className="ml-[6px] leading-[18px]">信息</button>
        <button type="button" className="ml-[6px] h-[18px] rounded-tl bg-[#f0f0f0] pl-[7px] leading-[18px] text-black">变形</button>
        <Svg w={10} h={18}><path d="M0 0c5 0 5 18 10 18H0z" fill="#f0f0f0" /></Svg>
      </div>
      <TransformPanel />
      <div className="h-[2px] shrink-0 bg-[#999]" />
      <PanelHead open title="库 - 未命名-1" menu />
      <LibraryPanel />
    </aside>
  );
}

export default function App() {
  return (
    <div className="flex h-screen flex-col overflow-hidden rounded-t-md border border-[#1c2a38] bg-[#a4d8e8] text-[12px] text-black [font-family:'Noto_Sans','Noto_Sans_CJK_SC',sans-serif]">
      <TitleBar />
      <div className="mr-1 ml-[2px] flex min-h-0 flex-1 flex-col">
        <MenuBar />
        <div className="flex min-h-0 flex-1 bg-[#7c7c7c]">
          <Toolbox />
          <div className="ml-2 flex min-w-0 flex-1 flex-col pt-[6px]">
            <DocumentPanel />
            <div className="flex h-[7px] shrink-0 justify-center bg-[#a8a8a8]">
              <button type="button" aria-label="Collapse panel" className="flex w-12 items-center justify-center bg-[#f0f0f0]"><Down /></button>
            </div>
            <Properties />
          </div>
          <div className="flex w-[6px] shrink-0 flex-col justify-center">
            <button type="button" aria-label="Collapse dock" className="flex h-[46px] items-center justify-center bg-[#c8c8c8]"><Svg w={4} h={7}><path d="M0 0v7l4-3.500z" fill="#fff" /></Svg></button>
          </div>
          <RightDock />
        </div>
        <div className="h-px shrink-0 bg-white" />
      </div>
      <div className="h-1 shrink-0" />
    </div>
  );
}
